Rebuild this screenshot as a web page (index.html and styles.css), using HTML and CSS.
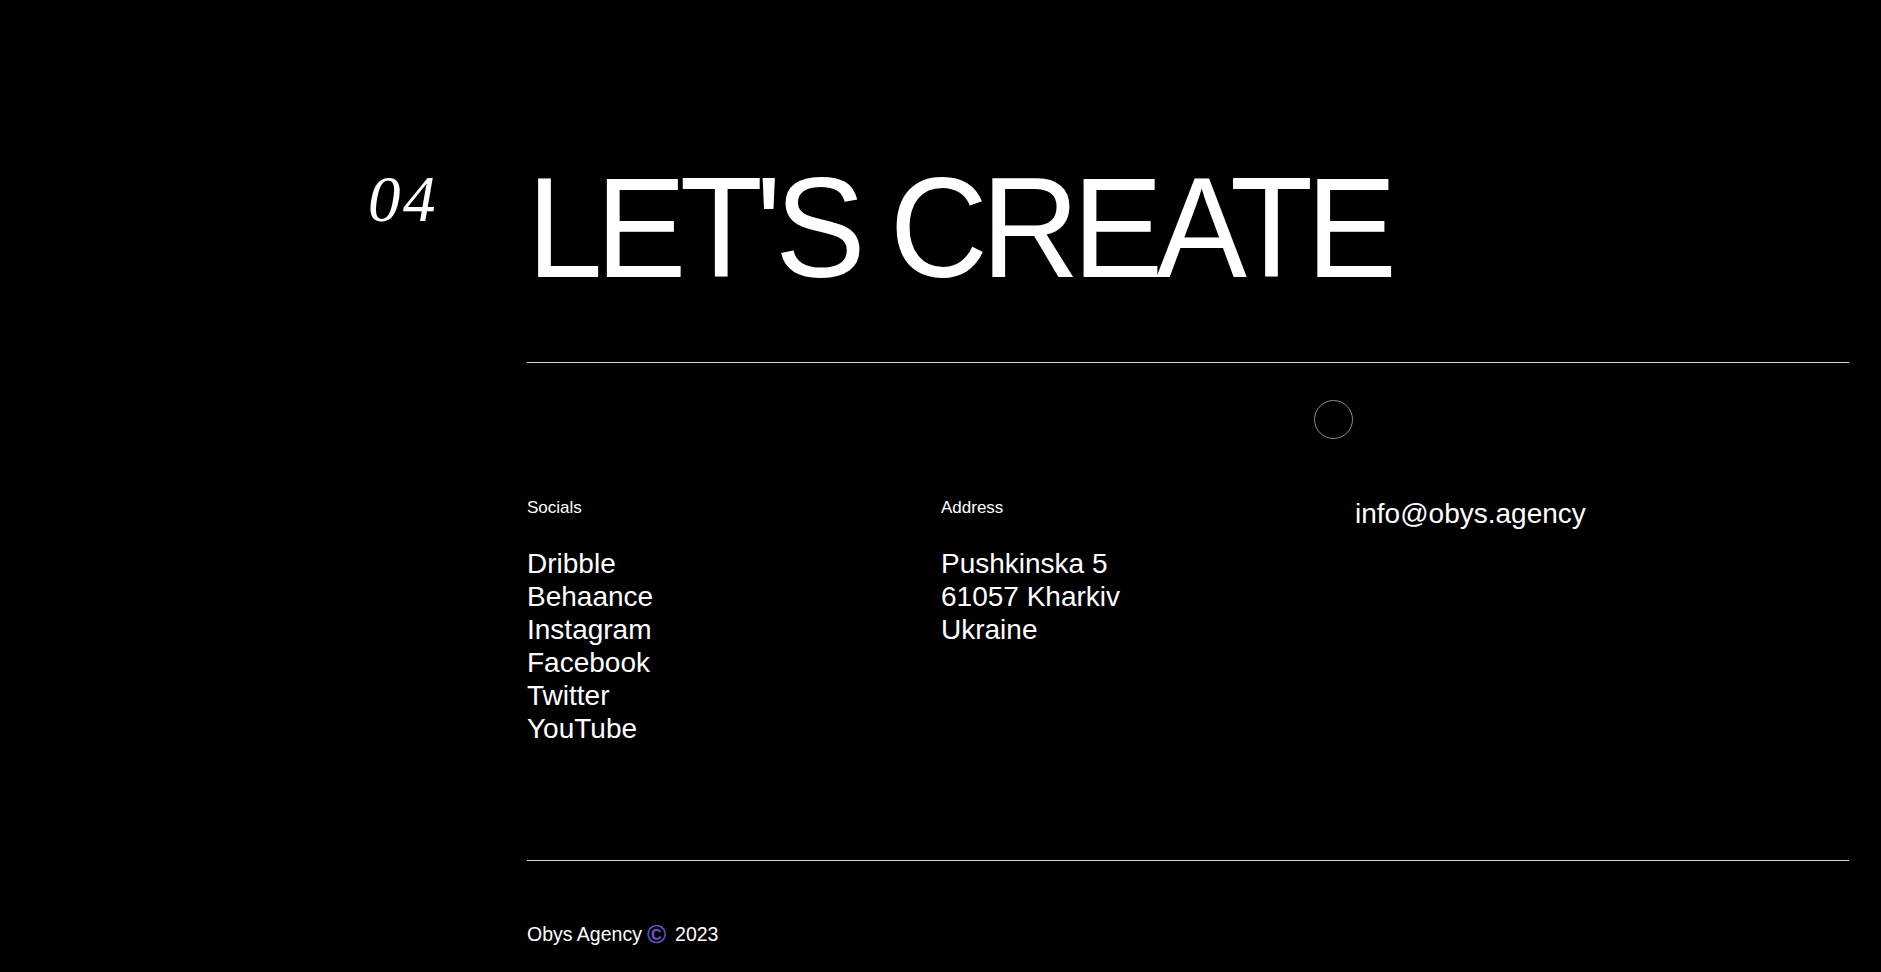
FILE: index.html
```html
<!DOCTYPE html>
<html lang="en">
<head>
<meta charset="utf-8">
<title>Let's create — Obys Agency</title>
<link rel="stylesheet" href="styles.css">
</head>
<body>
<main class="contact">
  <div class="num">04</div>
  <div class="body">
    <h2 class="title">LET'S CREATE</h2>
    <hr class="rule">
    <div class="cols">
      <div class="col">
        <p class="label">Socials</p>
        <ul class="list">
          <li>Dribble</li>
          <li>Behaance</li>
          <li>Instagram</li>
          <li>Facebook</li>
          <li>Twitter</li>
          <li>YouTube</li>
        </ul>
      </div>
      <div class="col">
        <p class="label">Address</p>
        <ul class="list">
          <li>Pushkinska 5</li>
          <li>61057 Kharkiv</li>
          <li>Ukraine</li>
        </ul>
      </div>
      <div class="col">
        <p class="email">info@obys.agency</p>
      </div>
    </div>
    <hr class="rule rule-bottom">
    <footer class="copy">Obys Agency<span class="c">©</span>2023</footer>
  </div>
  <span class="cursor"></span>
</main>
</body>
</html>
```

FILE: styles.css
```css
html, body {
  margin: 0;
  padding: 0;
  background: #000;
}

body {
  color: #fff;
  font-family: "Liberation Sans", Arial, sans-serif;
}

.contact {
  position: relative;
  display: grid;
  grid-template-columns: 159px 1fr;
  padding: 157px 32px 24px 368px;
}

.num {
  margin-top: 10px;
  font-family: "Liberation Serif", "Times New Roman", serif;
  font-style: italic;
  font-size: 65px;
  line-height: 1;
  letter-spacing: 0.04em;
}

.body {
  display: flex;
  flex-direction: column;
}

.title {
  margin: 0;
  font-weight: 400;
  font-size: 142px;
  line-height: 142px;
  letter-spacing: -0.05em;
  white-space: nowrap;
  transform: scaleX(0.957);
  transform-origin: 0 50%;
}

.rule {
  margin: 63px 0 0;
  border: 0;
  border-top: 1px solid #d6d6d6;
  height: 0;
}

.cols {
  display: grid;
  grid-template-columns: 414px 414px 414px;
  margin-top: 135px;
}

.label {
  margin: 0;
  font-size: 17px;
  line-height: 20px;
}

.list {
  list-style: none;
  margin: 29px 0 0;
  padding: 0;
  font-size: 28px;
  line-height: 33px;
}

.email {
  margin: -1px 0 0;
  font-size: 28px;
  line-height: 33px;
}

.rule-bottom {
  margin-top: 115px;
}

.copy {
  margin-top: 61px;
  font-size: 19.5px;
  line-height: 24px;
}

.c {
  display: inline-block;
  margin: 0 9px 0 5px;
  color: #6d52cc;
  font-size: 26px;
  font-weight: 700;
  line-height: 24px;
  vertical-align: -2px;
}

.cursor {
  position: absolute;
  left: 1314px;
  top: 400px;
  width: 37px;
  height: 37px;
  border: 1px solid #8c8c8c;
  border-radius: 50%;
}
```
